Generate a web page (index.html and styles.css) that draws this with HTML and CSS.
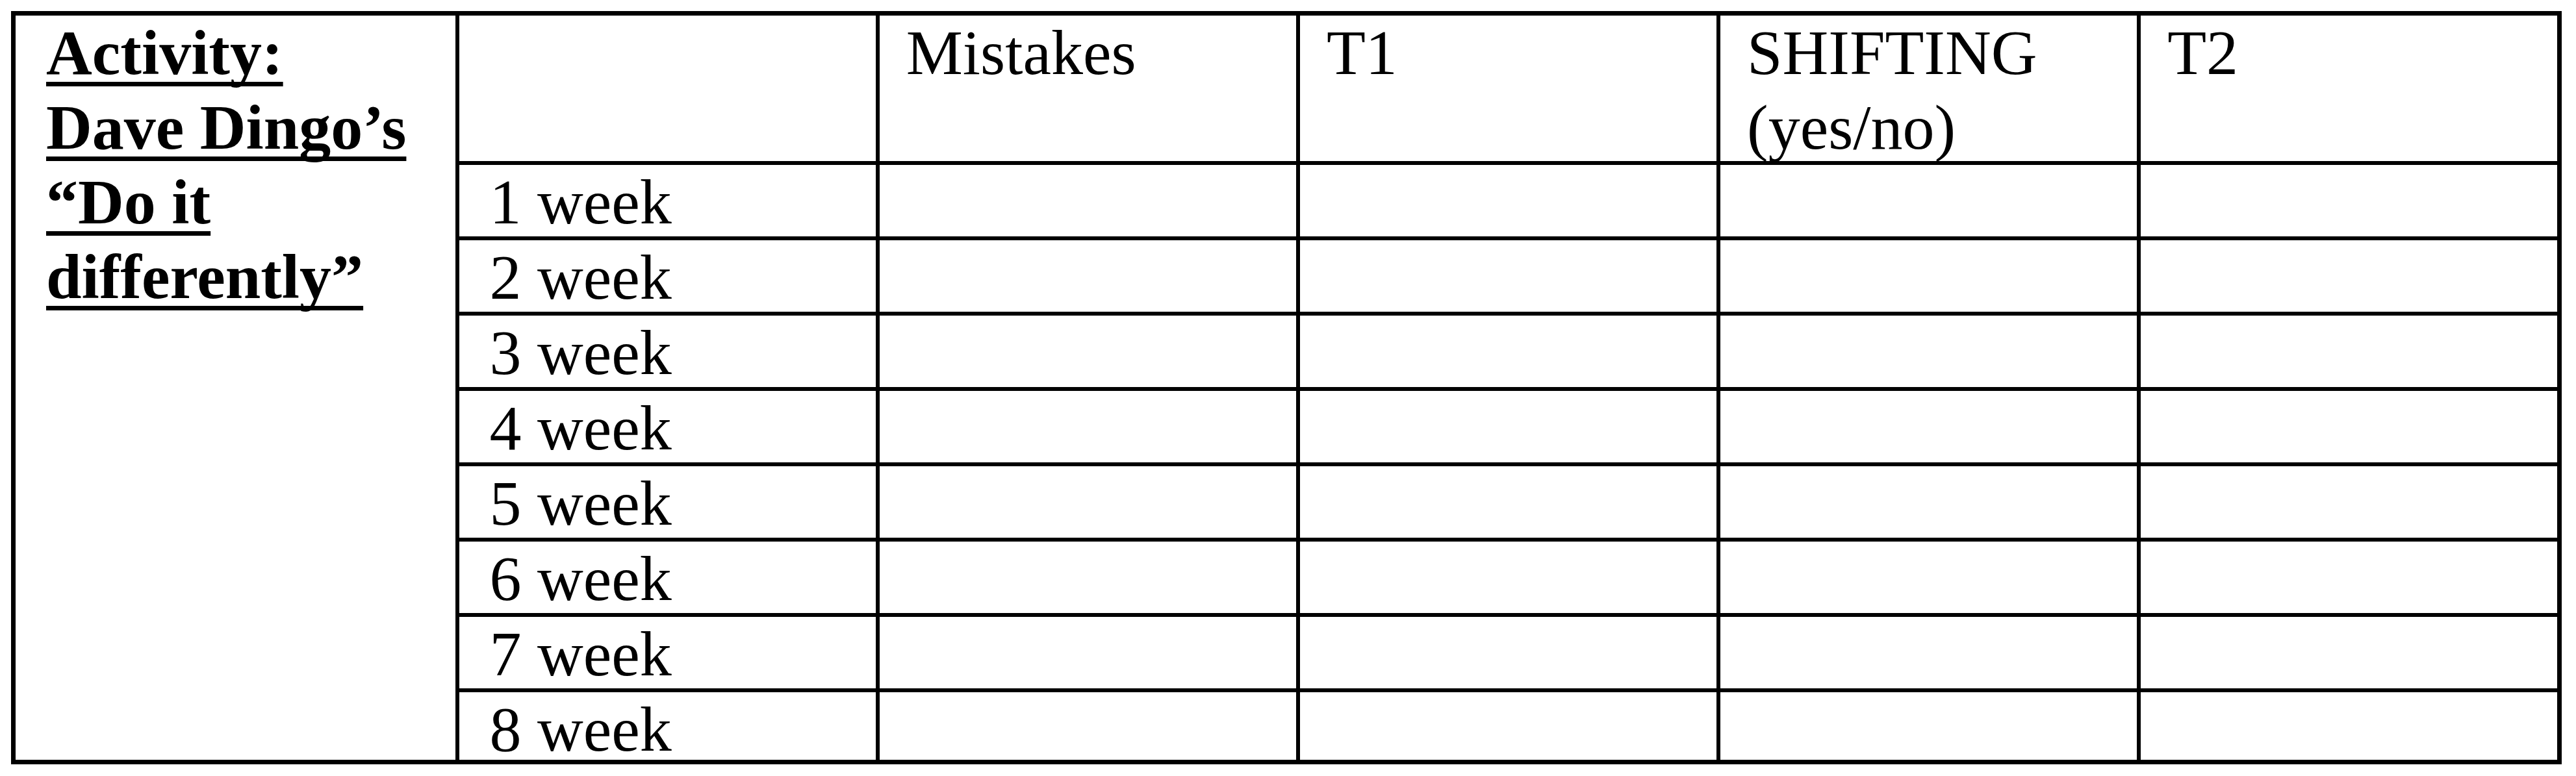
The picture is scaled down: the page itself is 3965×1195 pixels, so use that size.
FILE: index.html
```html
<!DOCTYPE html>
<html lang="en">
<head>
<meta charset="utf-8">
<title>Dave Dingo's "Do it differently"</title>
<link rel="stylesheet" href="styles.css">
</head>
<body>
<table class="tracker">
  <colgroup>
    <col class="c-activity">
    <col class="c-week">
    <col class="c-data">
    <col class="c-data">
    <col class="c-data">
    <col class="c-data">
  </colgroup>
  <tr class="head">
    <td class="activity" rowspan="9"><span class="ul">Activity:</span><br><span class="ul">Dave Dingo’s</span><br><span class="ul">“Do it</span><br><span class="ul">differently”</span></td>
    <td class="label"></td>
    <td class="hd"><div class="hd-text">Mistakes</div></td>
    <td class="hd"><div class="hd-text">T1</div></td>
    <td class="hd"><div class="hd-text">SHIFTING<br>(yes/no)</div></td>
    <td class="hd"><div class="hd-text">T2</div></td>
  </tr>
  <tr class="week"><td class="label">1 week</td><td></td><td></td><td></td><td></td></tr>
  <tr class="week"><td class="label">2 week</td><td></td><td></td><td></td><td></td></tr>
  <tr class="week"><td class="label">3 week</td><td></td><td></td><td></td><td></td></tr>
  <tr class="week"><td class="label">4 week</td><td></td><td></td><td></td><td></td></tr>
  <tr class="week"><td class="label">5 week</td><td></td><td></td><td></td><td></td></tr>
  <tr class="week"><td class="label">6 week</td><td></td><td></td><td></td><td></td></tr>
  <tr class="week"><td class="label">7 week</td><td></td><td></td><td></td><td></td></tr>
  <tr class="week week-last"><td class="label">8 week</td><td></td><td></td><td></td><td></td></tr>
</table>
</body>
</html>
```

FILE: styles.css
```css
html {
  background: #ffffff;
}

body {
  margin: 17px;
  background: #ffffff;
  color: #000000;
  font-family: "Liberation Serif", "Times New Roman", serif;
}

.tracker {
  border-collapse: collapse;
  table-layout: fixed;
  width: 3926px;
  border: 7px solid #000000;
  font-size: 98px;
}

.c-activity {
  width: 683px;
}

.tracker td {
  border: 6px solid #000000;
  padding: 0 0 0 41px;
  vertical-align: top;
  white-space: nowrap;
}

.head td {
  height: 224px;
  line-height: 115px;
}

.hd-text {
  height: 200px;
}

.tracker .activity {
  font-weight: bold;
  line-height: 115px;
  padding-left: 47px;
}

.ul {
  text-decoration: underline;
  text-decoration-thickness: 7px;
  text-underline-offset: 12px;
  text-decoration-skip-ink: none;
}

.tracker .label {
  padding-left: 47px;
}

.week td {
  height: 106px;
  line-height: 106px;
  padding-top: 4px;
}

.week-last td {
  height: 93px;
  line-height: 92px;
  padding-top: 11px;
}
```
